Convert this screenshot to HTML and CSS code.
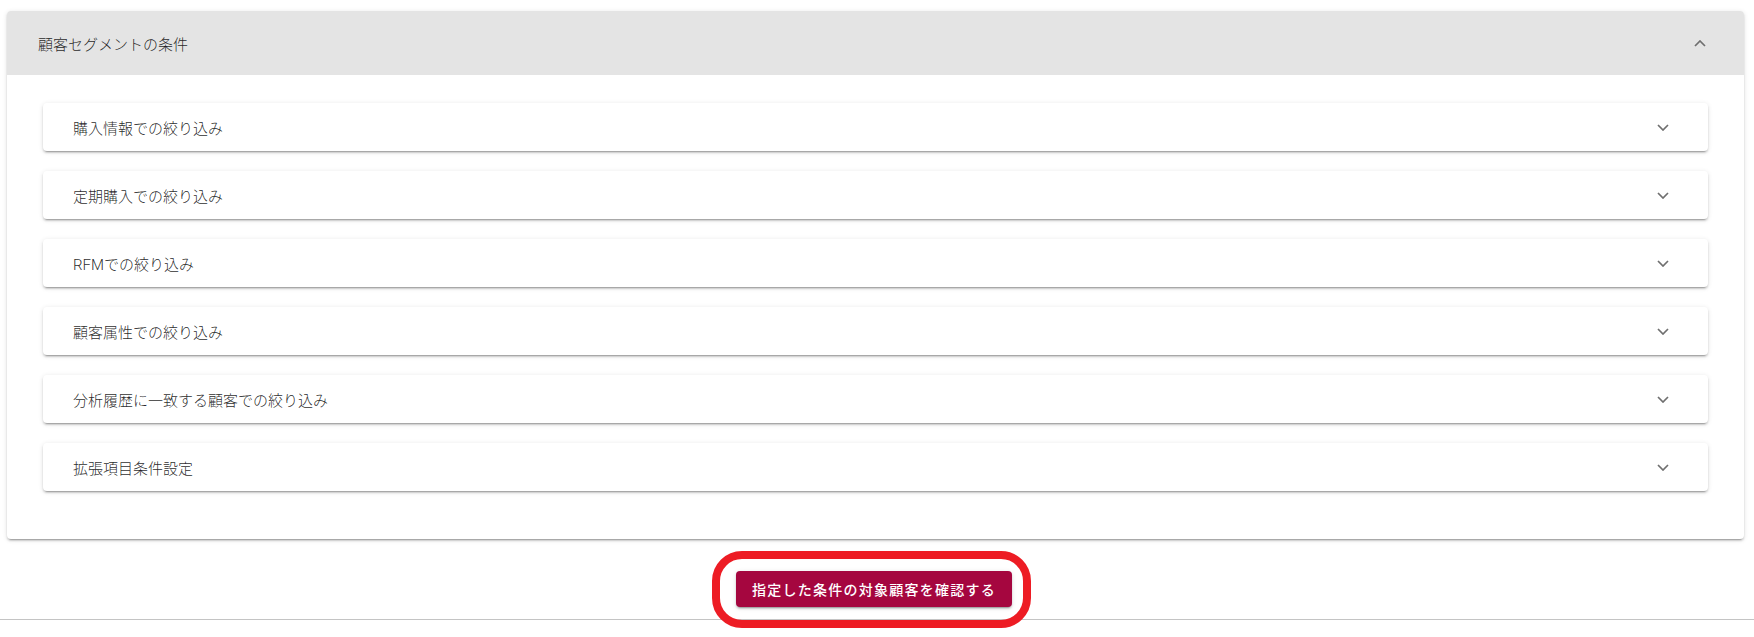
FILE: index.html
```html
<!DOCTYPE html>
<html lang="ja">
<head>
    <meta charset="UTF-8">
    <meta name="viewport" content="width=device-width, initial-scale=1.0">
    <title>顧客セグメントの条件</title>
    <link rel="stylesheet" href="styles.css">
</head>
<body>
    <div class="painel">
        <div class="painel-topo">
            <span>顧客セグメントの条件</span>
            <svg class="seta" width="12" height="7" viewBox="0 0 12 7"><polyline points="1,6 6,1 11,6" /></svg>
        </div>
        <div class="painel-corpo">
            <div class="filtro">
                <span>購入情報での絞り込み</span>
                <svg class="seta" width="12" height="7" viewBox="0 0 12 7"><polyline points="1,1 6,6 11,1" /></svg>
            </div>
            <div class="filtro">
                <span>定期購入での絞り込み</span>
                <svg class="seta" width="12" height="7" viewBox="0 0 12 7"><polyline points="1,1 6,6 11,1" /></svg>
            </div>
            <div class="filtro">
                <span>RFMでの絞り込み</span>
                <svg class="seta" width="12" height="7" viewBox="0 0 12 7"><polyline points="1,1 6,6 11,1" /></svg>
            </div>
            <div class="filtro">
                <span>顧客属性での絞り込み</span>
                <svg class="seta" width="12" height="7" viewBox="0 0 12 7"><polyline points="1,1 6,6 11,1" /></svg>
            </div>
            <div class="filtro">
                <span>分析履歴に一致する顧客での絞り込み</span>
                <svg class="seta" width="12" height="7" viewBox="0 0 12 7"><polyline points="1,1 6,6 11,1" /></svg>
            </div>
            <div class="filtro">
                <span>拡張項目条件設定</span>
                <svg class="seta" width="12" height="7" viewBox="0 0 12 7"><polyline points="1,1 6,6 11,1" /></svg>
            </div>
        </div>
    </div>

    <div class="acoes">
        <div class="destaque">
            <button class="botao">指定した条件の対象顧客を確認する</button>
            <div class="anel"></div>
        </div>
    </div>
    <div class="rodape"></div>
</body>
</html>
```

FILE: styles.css
```css
*{
    margin: 0;
    padding: 0;
    box-sizing: border-box;
}
body{
    background-color: #fff;
    font-family: Roboto, "Noto Sans CJK JP", sans-serif;
    color: rgba(0, 0, 0, 0.85);
}
.painel{
    margin: 11px 10px 0 7px;
    background-color: #fff;
    border-radius: 4px;
    overflow: hidden;
    box-shadow: 0 3px 1px -2px rgba(0,0,0,.2), 0 2px 2px 0 rgba(0,0,0,.14), 0 1px 5px 0 rgba(0,0,0,.12);
}
.painel-topo{
    height: 64px;
    background-color: #e4e4e4;
    display: flex;
    align-items: center;
    justify-content: space-between;
    padding: 0 38px 0 31px;
    font-size: 15px;
    font-weight: 300;
}
.painel-corpo{
    padding: 28px 36px 48px;
    display: flex;
    flex-direction: column;
    gap: 20px;
}
.filtro{
    height: 48px;
    background-color: #fff;
    border-radius: 4px;
    display: flex;
    align-items: center;
    justify-content: space-between;
    padding: 0 39px 0 30px;
    font-size: 15px;
    font-weight: 300;
    box-shadow: 0 3px 1px -2px rgba(0,0,0,.2), 0 2px 2px 0 rgba(0,0,0,.14), 0 1px 5px 0 rgba(0,0,0,.12);
}
.seta polyline{
    fill: none;
    stroke: #6f6f6f;
    stroke-width: 1.7;
}
.acoes{
    display: flex;
    justify-content: center;
    padding: 32px 6px 12px 0;
}
.destaque{
    position: relative;
}
.botao{
    height: 36px;
    padding: 0 16px;
    border: none;
    border-radius: 4px;
    background-color: #a5063f;
    color: #fff;
    font-family: Roboto, "Noto Sans CJK JP", sans-serif;
    font-size: 14px;
    font-weight: 500;
    letter-spacing: 1.25px;
    box-shadow: 0 3px 1px -2px rgba(0,0,0,.2), 0 2px 2px 0 rgba(0,0,0,.14), 0 1px 5px 0 rgba(0,0,0,.12);
}
.anel{
    position: absolute;
    left: -24px;
    right: -19px;
    top: -20px;
    bottom: -21px;
    border: 8px solid #ed1c24;
    border-radius: 30px;
}
.rodape{
    border-top: 1px solid #c4c4c4;
    height: 18px;
}
```
